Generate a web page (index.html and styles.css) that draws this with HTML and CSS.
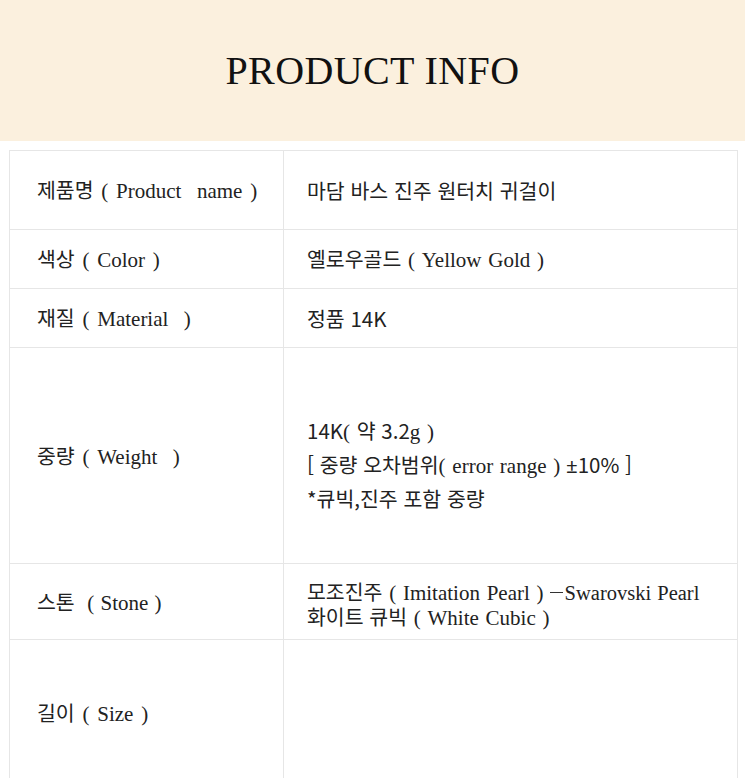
FILE: index.html
```html
<!DOCTYPE html>
<html lang="ko">
<head>
<meta charset="utf-8">
<link rel="stylesheet" href="styles.css">
</head>
<body>
<header class="banner"><h1 class="title">PRODUCT INFO</h1></header>
<div class="table">
  <div class="row r1">
    <div class="label"><p>제품명<span class="s"> ( Product &nbsp;name )</span></p></div>
    <div class="value"><p>마담 바스 진주 원터치 귀걸이</p></div>
  </div>
  <div class="row r2">
    <div class="label"><p>색상<span class="s"> ( Color )</span></p></div>
    <div class="value"><p>옐로우골드<span class="s"> ( Yellow Gold )</span></p></div>
  </div>
  <div class="row r3">
    <div class="label"><p>재질<span class="s"> ( Material &nbsp;)</span></p></div>
    <div class="value"><p>정품 14K</p></div>
  </div>
  <div class="row r4">
    <div class="label"><p>중량<span class="s"> ( Weight &nbsp;)</span></p></div>
    <div class="value multi">
      <p>14K<span class="s">( </span>약 3.2<span class="s">g )</span><br>[ 중량 오차범위<span class="s">( error range )</span> <span class="pm">±</span>10% ]<br>*큐빅,진주 포함 중량</p>
    </div>
  </div>
  <div class="row r5">
    <div class="label"><p>스톤<span class="s ns"> &nbsp;( Stone )</span></p></div>
    <div class="value tight">
      <p>모조진주<span class="s"> ( Imitation Pearl )</span><span class="dash"></span><span class="s sm">Swarovski Pearl</span><br>화이트 큐빅<span class="s"> ( White Cubic )</span></p>
    </div>
  </div>
  <div class="row r6">
    <div class="label"><p>길이<span class="s"> ( Size )</span></p></div>
    <div class="value"></div>
  </div>
</div>
</body>
</html>
```
FILE: styles.css
```css
html, body { margin: 0; padding: 0; background: #fff; }
body { font-family: "Noto Sans CJK KR", "Noto Sans", sans-serif; color: #222; }
.banner {
  height: 141px;
  background: #fbf0de;
  display: flex;
  align-items: center;
  justify-content: center;
}
.title {
  margin: 0;
  font-family: "Liberation Serif", "DejaVu Serif", serif;
  font-weight: normal;
  font-size: 40px;
  color: #111;
  letter-spacing: 0.4px;
}
.table {
  margin: 9px 7px 0 9px;
  border: 1px solid #e6e6e6;
  border-bottom: none;
}
.row {
  display: grid;
  grid-template-columns: 274px 1fr;
  border-bottom: 1px solid #e6e6e6;
}
.row:last-child { border-bottom: none; }
.label, .value {
  display: flex;
  align-items: center;
  font-size: 20.5px;
  line-height: 24px;
  white-space: nowrap;
}
.label p, .value p { margin: 0; }
.label { padding-left: 27px; border-right: 1px solid #e6e6e6; }
.value { padding-left: 23px; }
.s {
  font-family: "Liberation Serif", "DejaVu Serif", serif;
  font-size: 21px;
  word-spacing: 1.5px;
}
.label .s { word-spacing: 2.5px; }
.label .ns { word-spacing: 1px; }
.sm { font-size: 20.5px; word-spacing: 1px; }
.pm { font-family: "Noto Sans", "Liberation Sans", sans-serif; }
.dash {
  display: inline-block;
  width: 13px;
  height: 1.5px;
  background: #333;
  vertical-align: middle;
  margin: 0 2px 3px 6px;
}
.multi { line-height: 32px; padding-top: 17px; }
.tight { line-height: 23px; padding-top: 6px; }
.r1 { height: 78px; }
.r2 { height: 58px; }
.r3 { height: 58px; }
.r4 { height: 215px; }
.r5 { height: 75px; }
.r6 { height: 145px; }
```
